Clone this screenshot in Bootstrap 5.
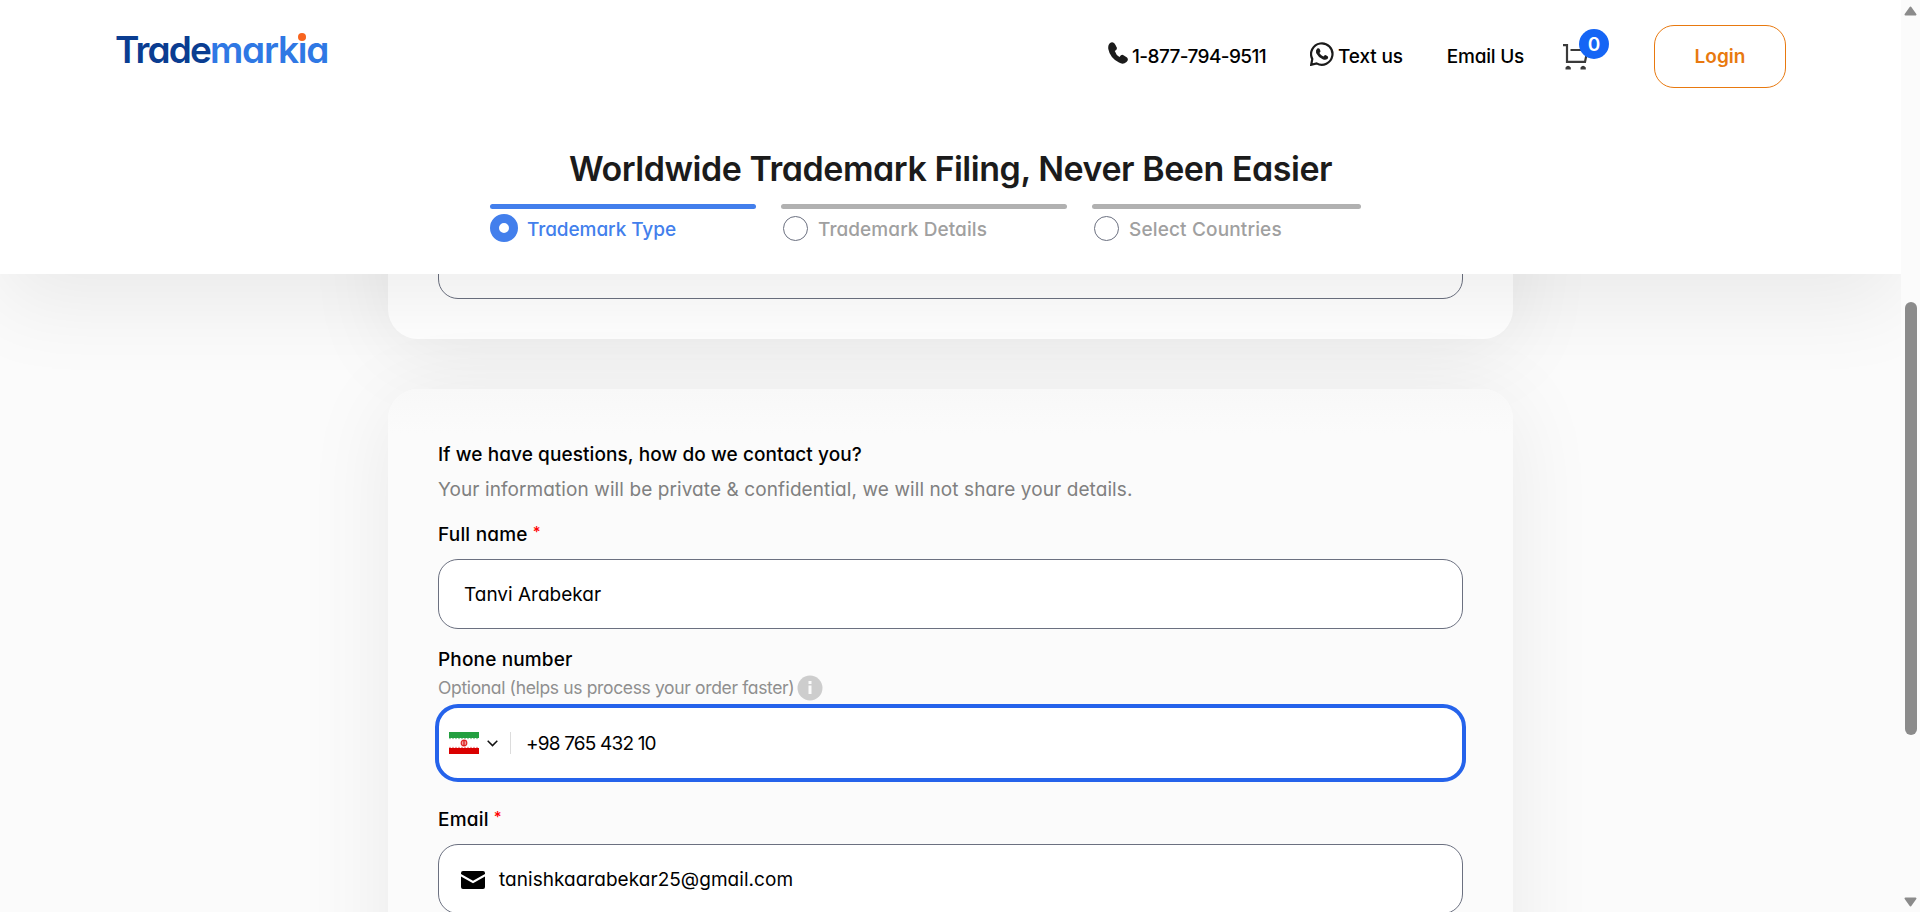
<!DOCTYPE html>
<html lang="en">
<head>
<meta charset="utf-8">
<meta name="viewport" content="width=device-width, initial-scale=1">
<title>Trademarkia</title>
<link href="https://cdn.jsdelivr.net/npm/bootstrap@5.3.0/dist/css/bootstrap.min.css" rel="stylesheet">
<script src="https://cdn.jsdelivr.net/npm/bootstrap@5.3.0/dist/js/bootstrap.bundle.min.js"></script>
<style>
body{font-family:Inter,"Liberation Sans",sans-serif;font-feature-settings:"cv11";font-size:19px;line-height:28px;color:#000;background:#fbfbfb;height:100vh}
.medium{font-weight:500}
svg{display:block;flex-shrink:0}
.site-head{height:274px;z-index:5;box-shadow:0 30px 80px rgba(0,0,0,.07)}
.top-nav{height:113px;padding:0 115px;white-space:nowrap}
.brand{font-size:37px;line-height:44px;font-weight:600;color:#0a3d91;margin-top:-13px;letter-spacing:-1.85px}
.brand .second{color:#2f78e4;letter-spacing:-1.25px}
.brand-dot{position:absolute;width:8px;height:8px;border-radius:50%;background:#f8641e;left:183px;top:5px}
.nav-tel{margin:0 44px 0 4px;letter-spacing:-.6px}
.nav-text{margin:0 44px 0 4px;letter-spacing:-.16px}
.nav-mail{margin-right:39px;letter-spacing:-.22px}
.cart-count{position:absolute;left:16px;top:-15px;width:30px;height:30px;border-radius:50%;background:#1565f5;color:#fff;font-size:19px;line-height:31px;font-weight:600;text-align:center}
.btn-login{width:132px;height:63px;border:1px solid #e8790f;border-radius:20px;color:#e8790f;font-size:19px;font-weight:600;padding:2px 0 0;margin-left:65px}
.headline{font-size:34px;line-height:40px;font-weight:600;color:#1b1b1b;margin:36px 0 15px;letter-spacing:-.46px}
.steps{padding-left:490px;gap:25px}
.step{color:#a0a0a0;font-weight:500;width:269px;letter-spacing:.15px}
.step.wide{width:286px;letter-spacing:.08px}
.step.active{width:266px;color:#437fec;letter-spacing:-.07px}
.step .bar{height:5px;border-radius:3px;background:#b1b1b1;margin-bottom:5px}
.step.active .bar{background:#437fec}
.step .caption{padding-top:2px}
.dot{width:25px;height:25px;border:1px solid #6b7080;border-radius:50%;margin:-4px 10px 0 2px}
.step.active .dot{width:28px;height:28px;border:9px solid #437fec;margin:-4px 9px 0 0}
.panel{width:1125px;margin-left:388px;border-radius:30px;background:#fcfcfc;box-shadow:0 12px 88px rgba(0,0,0,.075);padding:0 50px;flex-shrink:0}
.panel-top{margin-top:-235px;height:300px;margin-bottom:50px;background:#fff;padding-top:190px}
.panel-form{height:700px;padding-top:52px;background:linear-gradient(#f8f8f8,#fbfbfb 45px)}
.field{height:70px;border:1px solid #6b7080;border-radius:20px;background:#fff;padding:2px 25px 0}
.field.phone{height:78px;margin:2px -3px 24px;border:4px solid #2563eb;border-radius:23px;padding:0 10px}
.divider{width:1px;height:22px;background:#dcdcdc;margin:0 15px 0 12px}
.label-row{margin-bottom:10px;letter-spacing:.2px}
.req{color:#f00;font-size:15px;line-height:22px;margin-left:5px}
.question{letter-spacing:.09px;margin-bottom:7px}
.privacy{color:#808080;letter-spacing:.09px;margin-bottom:17px}
.phone-label{margin-top:17px;letter-spacing:.15px}
.optional{color:#8f8f8f;font-size:17.5px;letter-spacing:-.35px}
.number{letter-spacing:-.82px;padding-top:2px}
.scroller{width:19px;background:#fbfbfb;z-index:6;padding:6px 0 5px}
.thumb{width:12px;height:433px;border-radius:6px;background:#8b8b8b;margin:286px 0 auto}
</style>
</head>
<body class="d-flex overflow-hidden">
<div class="flex-grow-1 d-flex flex-column overflow-hidden">
<header class="site-head bg-white position-relative flex-shrink-0">
  <nav class="top-nav d-flex align-items-center">
    <a class="brand text-decoration-none position-relative me-auto">Trade<span class="second">markia</span><i class="brand-dot"></i></a>
    <svg style="margin-top:-7px" width="20" height="22" viewBox="0 0 20 22"><path d="M3 .5Q6-.5 7.500 3L9 6Q9 8 6.800 9Q8 13 11.500 15Q13.500 12 15.500 13.200L19 15.500Q21 17.500 18.500 20Q15 23 11 20.500Q2 16 .3 7Q-.3 2 3 .5" fill="#1b1b1b"/></svg>
    <span class="nav-tel medium">1-877-794-9511</span>
    <svg style="margin-top:-5px" width="24" height="24" viewBox="0 0 24 24"><path d="M1.200 22.800L2.300 17A10.700 10.700 0 1 1 6.600 21.400Z" fill="none" stroke="#1b1b1b" stroke-width="2.200"/><path d="M7.200 6.600Q9 5.600 9.800 7.300L10.500 9.200Q10.500 10 9.400 11Q10.900 13.500 13.400 14.600L14.700 13.200Q15.300 12.900 16 13.300L17.900 14.400Q18.700 15.400 17.400 17Q15.400 18.400 12.700 17.200Q8 15 6.100 11Q5.400 8.300 7.200 6.600" fill="#1b1b1b"/></svg>
    <span class="nav-text medium">Text us</span>
    <span class="nav-mail medium">Email Us</span>
    <div class="position-relative"><svg width="26" height="26" viewBox="0 0 26 26"><path d="M0 1.200H4V17.800H22L24.500 6M7.500 6H20" fill="none" stroke="#3a3a3a" stroke-width="2.200"/><path d="M2.500 25.500V23.500Q5 20 7.800 23.500V25.500ZM17.500 25.500V23.500Q20 20 22.800 23.500V25.500Z" fill="#3a3a3a"/></svg><span class="cart-count">0</span></div>
    <button class="btn btn-login">Login</button>
  </nav>
  <h1 class="headline text-center">Worldwide Trademark Filing, Never Been Easier</h1>
  <div class="steps d-flex">
    <div class="step active"><div class="bar"></div><div class="caption d-flex align-items-center"><span class="dot"></span>Trademark Type</div></div>
    <div class="step wide"><div class="bar"></div><div class="caption d-flex align-items-center"><span class="dot"></span>Trademark Details</div></div>
    <div class="step"><div class="bar"></div><div class="caption d-flex align-items-center"><span class="dot"></span>Select Countries</div></div>
  </div>
</header>
<section class="panel panel-top"><div class="field"></div></section>
<section class="panel panel-form">
  <div class="question medium">If we have questions, how do we contact you?</div>
  <div class="privacy">Your information will be private &amp; confidential, we will not share your details.</div>
  <div class="label-row medium d-flex">Full name<span class="req">*</span></div>
  <div class="field d-flex align-items-center">Tanvi Arabekar</div>
  <div class="phone-label medium">Phone number</div>
  <div class="optional d-flex align-items-center">Optional (helps us process your order faster)
    <svg style="margin-left:3px" width="26" height="26" viewBox="0 0 26 26"><circle cx="13" cy="13" r="12.500" fill="#cdcdcd"/><path d="M11.500 6H14.500V9H11.500ZM11.500 10.500H14.500V19H11.500Z" fill="#fbfbfb"/></svg></div>
  <div class="field phone d-flex align-items-center">
    <svg width="30" height="22" viewBox="0 0 30 22"><path fill="#fff" d="M0 0h30v22H0z"/><path fill="#239f40" d="M0 0h30v6H0z"/><path fill="#da0000" d="M0 16h30v6H0z"/><path d="M0 6.600H30" stroke="#9bcfa5" stroke-dasharray="2 1"/><path d="M0 15.400H30" stroke="#ef9a9a" stroke-dasharray="2 1"/><circle cx="15" cy="11" r="2.800" fill="#f3a0a0" stroke="#e02828" stroke-width="1.200"/><path d="M15 8V14" stroke="#da1010" stroke-width="1.200"/></svg>
    <svg style="margin-left:8px" width="11" height="7" viewBox="0 0 11 7"><path d="M.7.800L5.500 5.600L10.300.800" fill="none" stroke="#111" stroke-width="1.500"/></svg>
    <span class="divider"></span><span class="number">+98 765 432 10</span>
  </div>
  <div class="label-row medium d-flex">Email<span class="req">*</span></div>
  <div class="field d-flex align-items-center" style="padding-left:22px;letter-spacing:.04px">
    <svg style="margin:-1px 14px 0 0" width="24" height="18" viewBox="0 0 24 18"><path d="M2 0H22Q24 0 24 2V3L12 9.800L0 3V2Q0 0 2 0ZM0 5.500L12 12.300L24 5.500V16Q24 18 22 18H2Q0 18 0 16Z"/></svg>tanishkaarabekar25@gmail.com</div>
</section>
</div>
<div class="scroller d-flex flex-column align-items-center flex-shrink-0">
  <svg width="13" height="10" viewBox="0 0 13 10"><path d="M6.500 1.500L11.500 8.500H1.500Z" fill="#8b8b8b" stroke="#8b8b8b" stroke-width="2" stroke-linejoin="round"/></svg>
  <div class="thumb"></div>
  <svg width="13" height="10" viewBox="0 0 13 10"><path d="M6.500 8.500L11.500 1.500H1.500Z" fill="#8b8b8b" stroke="#8b8b8b" stroke-width="2" stroke-linejoin="round"/></svg>
</div>
</body>
</html>
